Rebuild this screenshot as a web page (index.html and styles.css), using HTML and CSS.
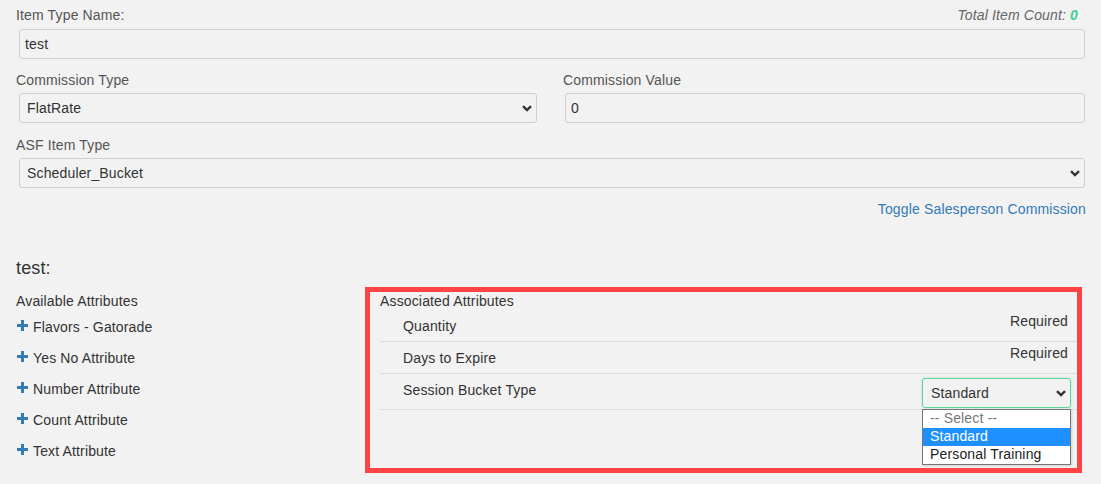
FILE: index.html
```html
<!DOCTYPE html>
<html>
<head>
<meta charset="utf-8">
<title>Item Type</title>
<link rel="stylesheet" href="styles.css">
</head>
<body>
<div class="page">
  <div class="top-row">
    <label class="lbl">Item Type Name:</label>
    <span class="count">Total Item Count: <b class="count-num">0</b></span>
  </div>
  <input class="field field-name" type="text" value="test">

  <div class="two-col">
    <div class="col">
      <label class="lbl">Commission Type</label>
      <div class="select-wrap sel-type">
        <select class="field select"><option>FlatRate</option></select>
        <svg class="chev" width="10" height="7" viewBox="0 0 10 7"><path d="M1 1.2 L5 5 L9 1.2" fill="none" stroke="#333" stroke-width="2.4"/></svg>
      </div>
    </div>
    <div class="col col-right">
      <label class="lbl">Commission Value</label>
      <input class="field field-value" type="text" value="0">
    </div>
  </div>

  <label class="lbl lbl-asf">ASF Item Type</label>
  <div class="select-wrap sel-asf">
    <select class="field select"><option>Scheduler_Bucket</option></select>
    <svg class="chev" width="10" height="7" viewBox="0 0 10 7"><path d="M1 1.2 L5 5 L9 1.2" fill="none" stroke="#333" stroke-width="2.4"/></svg>
  </div>

  <div class="toggle-row"><a class="link" href="#">Toggle Salesperson Commission</a></div>

  <h3 class="heading">test:</h3>

  <div class="attrs">
    <div class="avail">
      <div class="avail-title">Available Attributes</div>
      <ul class="avail-list">
        <li class="avail-item"><svg class="plus" width="11" height="11" viewBox="0 0 11 11"><rect x="4" y="0" width="3" height="11" fill="#337ab7"/><rect x="0" y="4" width="11" height="3" fill="#337ab7"/></svg>Flavors - Gatorade</li>
        <li class="avail-item"><svg class="plus" width="11" height="11" viewBox="0 0 11 11"><rect x="4" y="0" width="3" height="11" fill="#337ab7"/><rect x="0" y="4" width="11" height="3" fill="#337ab7"/></svg>Yes No Attribute</li>
        <li class="avail-item"><svg class="plus" width="11" height="11" viewBox="0 0 11 11"><rect x="4" y="0" width="3" height="11" fill="#337ab7"/><rect x="0" y="4" width="11" height="3" fill="#337ab7"/></svg>Number Attribute</li>
        <li class="avail-item"><svg class="plus" width="11" height="11" viewBox="0 0 11 11"><rect x="4" y="0" width="3" height="11" fill="#337ab7"/><rect x="0" y="4" width="11" height="3" fill="#337ab7"/></svg>Count Attribute</li>
        <li class="avail-item"><svg class="plus" width="11" height="11" viewBox="0 0 11 11"><rect x="4" y="0" width="3" height="11" fill="#337ab7"/><rect x="0" y="4" width="11" height="3" fill="#337ab7"/></svg>Text Attribute</li>
      </ul>
    </div>

    <div class="assoc">
      <div class="assoc-title">Associated Attributes</div>
      <div class="arow">
        <span class="aname">Quantity</span>
        <span class="req">Required</span>
      </div>
      <div class="arow">
        <span class="aname">Days to Expire</span>
        <span class="req">Required</span>
      </div>
      <div class="arow arow-sel">
        <span class="aname">Session Bucket Type</span>
        <div class="select-wrap sel-bucket">
          <select class="field select select-focus"><option>Standard</option></select>
          <svg class="chev" width="10" height="7" viewBox="0 0 10 7"><path d="M1 1.2 L5 5 L9 1.2" fill="none" stroke="#333" stroke-width="2.4"/></svg>
          <ul class="dropdown">
            <li class="opt opt-muted">-- Select --</li>
            <li class="opt opt-active">Standard</li>
            <li class="opt">Personal Training</li>
          </ul>
        </div>
      </div>
    </div>
  </div>
</div>
</body>
</html>
```

FILE: styles.css
```css
* { box-sizing: border-box; }

html, body {
  margin: 0;
  background: #f1f2f1;
}

body {
  font-family: "Liberation Sans", Arial, sans-serif;
  font-size: 14px;
  letter-spacing: 0.15px;
  color: #333;
}

.page {
  padding: 5px 15px 0 16px;
}

.top-row {
  display: flex;
  justify-content: space-between;
  align-items: center;
  height: 20px;
}

.lbl {
  display: block;
  color: #555;
  line-height: 20px;
}

.count {
  font-style: italic;
  color: #666;
  margin-right: 8px;
  line-height: 20px;
}

.count-num {
  color: #3fcf8e;
  font-weight: bold;
}

.field {
  display: block;
  height: 30px;
  border: 1px solid #cfcfcf;
  border-radius: 3px;
  background: #f1f2f1;
  font-family: "Liberation Sans", Arial, sans-serif;
  font-size: 14px;
  letter-spacing: 0.15px;
  color: #333;
  padding: 0 5px;
  outline: none;
}

.field-name {
  margin: 4px 1px 0 3px;
  width: calc(100% - 4px);
}

.two-col {
  display: grid;
  grid-template-columns: 531px 1fr;
  column-gap: 16px;
  margin-top: 11px;
}

.col .lbl {
  margin-bottom: 3px;
}

.sel-type {
  margin-left: 3px;
  width: 518px;
}

.field-value {
  margin-left: 2px;
  width: calc(100% - 3px);
}

.select-wrap {
  position: relative;
}

.select {
  width: 100%;
  appearance: none;
  -webkit-appearance: none;
  padding: 0 24px 0 7px;
}

.chev {
  position: absolute;
  right: 5px;
  top: 12px;
  pointer-events: none;
}

.lbl-asf {
  margin-top: 12px;
}

.sel-asf {
  margin: 3px 1px 0 3px;
}

.toggle-row {
  display: flex;
  justify-content: flex-end;
  margin-top: 11px;
  line-height: 20px;
}

.link {
  color: #337ab7;
  text-decoration: none;
}

.heading {
  margin: 37px 0 0;
  font-size: 18px;
  font-weight: normal;
  line-height: 24px;
  color: #333;
}

.attrs {
  display: flex;
  margin-top: 7px;
}

.avail {
  width: 349px;
  flex: none;
  padding-top: 4px;
}

.avail-title {
  line-height: 20px;
}

.avail-list {
  list-style: none;
  margin: 0;
  padding: 0;
}

.avail-item {
  display: flex;
  align-items: center;
  margin-top: 6px;
  line-height: 20px;
}

.avail-item + .avail-item {
  margin-top: 11px;
}

.plus {
  display: block;
  margin: -3px 5px 0 1px;
}

.assoc {
  width: 717px;
  height: 186px;
  border: 5px solid #fd4346;
  padding: 0 0 0 10px;
}

.assoc-title {
  line-height: 18px;
}

.arow {
  display: flex;
  justify-content: space-between;
  align-items: flex-start;
  height: 32px;
  border-bottom: 1px solid #dcdcdc;
  padding: 0 9px 0 23px;
}

.aname {
  margin-top: 6px;
  line-height: 20px;
}

.req {
  margin-top: 1px;
  line-height: 20px;
}

.arow-sel {
  height: 36px;
}

.sel-bucket {
  width: 149px;
  margin: 4px -3px 0 0;
}

.select-focus {
  border-color: #5ed39c;
  box-shadow: 0 0 3px rgba(94, 211, 156, 0.35);
  padding-left: 8px;
}

.dropdown {
  position: absolute;
  left: 0;
  top: 31px;
  width: 149px;
  margin: 0;
  padding: 0;
  list-style: none;
  background: #fff;
  border: 1px solid #767676;
  box-shadow: 1px 1px 2px rgba(0, 0, 0, 0.15);
}

.opt {
  height: 18px;
  line-height: 17px;
  padding-left: 7px;
  color: #222;
}

.opt-muted {
  color: #777;
}

.opt-active {
  background: #1e90ff;
  color: #fff;
}
```
